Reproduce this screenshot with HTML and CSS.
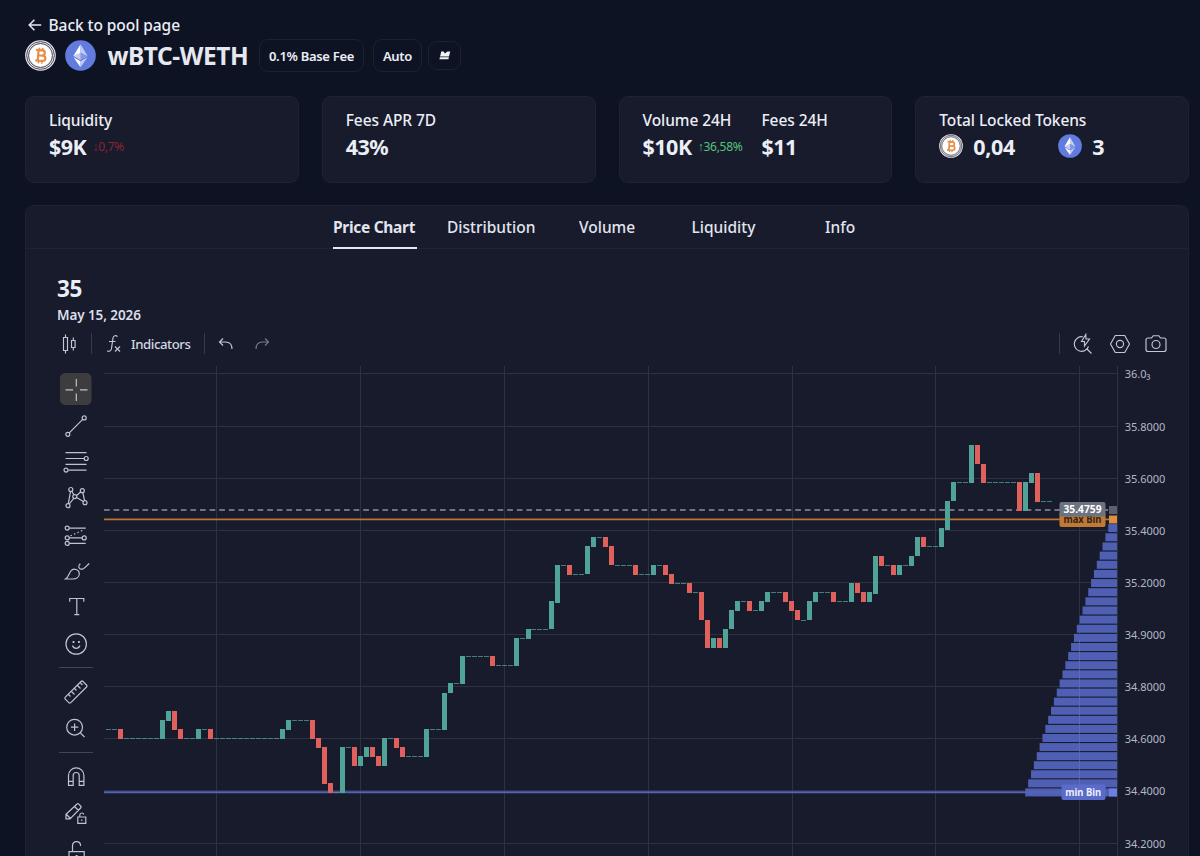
FILE: index.html
```html
<!DOCTYPE html>
<html lang="en">
<head>
<meta charset="utf-8">
<title>wBTC-WETH pool</title>
<link rel="stylesheet" href="styles.css">
</head>
<body>
<svg class="defs" width="0" height="0">
  <symbol id="btc" viewBox="0 0 32 32">
    <circle cx="16" cy="16" r="15.8" fill="#eceaf0"/>
    <circle cx="16" cy="16" r="14.3" fill="none" stroke="#35333f" stroke-width=".9"/>
    <circle cx="16" cy="16" r="12.4" fill="none" stroke="#35333f" stroke-width=".9"/>
    <circle cx="16" cy="16" r="11" fill="#fff"/>
    <g fill="none" stroke="#e58f4a" stroke-width="2.3" transform="rotate(4 16 16)">
      <path d="M11 10.600h6.600a2.600 2.600 0 0 1 0 5.300H13.600m0 0h4.800a2.800 2.800 0 0 1 0 5.600H11M13.600 10.600v10.900"/>
      <path stroke-width="1.8" d="M14.400 8v2.600M17.800 8v2.600M14.400 21.500v2.800M17.800 21.500v2.800"/>
    </g>
  </symbol>
  <symbol id="eth" viewBox="0 0 32 32">
    <circle cx="16" cy="16" r="15.8" fill="#627bdf"/>
    <path d="M16 4.300 8.800 16.300 16 20.500z" fill="#fff"/>
    <path d="M16 4.300 23.200 16.300 16 20.500z" fill="#c3cdf4"/>
    <path d="M8.800 16.300 16 13v7.500z" fill="#c3cdf4"/>
    <path d="M23.200 16.300 16 13v7.500z" fill="#8497e5"/>
    <path d="M8.800 17.800 16 22v6z" fill="#fff"/>
    <path d="M23.200 17.800 16 22v6z" fill="#c3cdf4"/>
  </symbol>
</svg>

<main class="page">
  <a class="back">
    <svg width="14" height="14" viewBox="0 0 14 14"><path d="M13.200 7H1.200M6.400 1.800 1.200 7l5.200 5.200"/></svg>
    <span>Back to pool page</span>
  </a>
  <header class="pair">
    <svg class="coin"><use href="#btc"/></svg>
    <svg class="coin second"><use href="#eth"/></svg>
    <h1>wBTC-WETH</h1>
    <span class="pill fee">0.1% Base Fee</span>
    <span class="pill auto">Auto</span>
    <span class="pill mark">
      <svg width="12" height="9" viewBox="0 0 12 9"><path d="M2.200.6 4.700.6 5.800 2.600 8.500.5 11.200.4 10 5.400H1.100z M.9 6.300H9.900L9.400 8.200H.4z"/></svg>
    </span>
  </header>

  <section class="cards">
    <article class="card"><div class="stat"><h2>Liquidity</h2><p><b>$9K</b><small class="down">↓0,7%</small></p></div></article>
    <article class="card"><div class="stat"><h2>Fees APR 7D</h2><p><b>43%</b></p></div></article>
    <article class="card">
      <div class="stat wide"><h2>Volume 24H</h2><p><b>$10K</b><small class="up">↑36,58%</small></p></div>
      <div class="stat"><h2>Fees 24H</h2><p><b>$11</b></p></div>
    </article>
    <article class="card"><div class="stat"><h2>Total Locked Tokens</h2>
      <p class="tokens"><svg><use href="#btc"/></svg><b class="amount">0,04</b><svg><use href="#eth"/></svg><b>3</b></p></div></article>
  </section>

  <section class="panel">
    <nav class="tabs">
      <a class="tab active">Price Chart</a><a class="tab t2">Distribution</a><a class="tab t3">Volume</a><a class="tab t4">Liquidity</a><a class="tab t5">Info</a>
    </nav>
    <div class="summary"><strong>35</strong><span>May 15, 2026</span></div>

    <div class="topbar">
      <svg class="ic kline" width="18" height="22" viewBox="0 0 18 22"><path d="M3.500 4.500h4v13h-4zM5.500 1.500v3M5.500 17.500v3M11.500 7.500h3.600v7h-3.600zM13.300 4.500v3M13.300 14.500v3"/></svg>
      <i class="bar"></i>
      <svg class="ic fx" width="16" height="20" viewBox="0 0 16 20"><path d="M11.500 2.600C10 .9 7.400 1.600 7 4L5.500 14.500C5.200 17.200 3.100 17.700 1.200 16.900M3 7.500H9.500M9 12.500l5 5M14 12.500l-5 5"/></svg>
      <span class="indicators">Indicators</span>
      <i class="bar"></i>
      <svg class="ic undo" width="16" height="14" viewBox="0 0 16 14"><path d="M5 1.500 1.500 5 5 8.500M1.500 5H7.500Q14 5 14 12"/></svg>
      <svg class="ic redo" width="16" height="14" viewBox="0 0 16 14"><path d="M11 1.500 14.500 5 11 8.500M14.500 5H8.500Q2 5 2 12"/></svg>
      <span class="grow"></span>
      <i class="bar"></i>
      <svg class="ic quick" width="20" height="22" viewBox="0 0 20 22"><path d="M9.800 3.800A7.300 7.300 0 1 0 15.500 13.500M13.500 15.500l5 5M12.800 1.500 8.500 8.500h3v4.500l5-7h-3.500z"/></svg>
      <svg class="ic hex" width="22" height="20" viewBox="0 0 22 20"><path d="M6.300 1.500h9.400L20.500 10l-4.800 8.500H6.300L1.500 10z"/><circle cx="11" cy="10" r="3.600"/></svg>
      <svg class="ic cam" width="22" height="20" viewBox="0 0 22 20"><path d="M3 4h3.500L8.200 1.700h5.600L15.500 4H19q2 0 2 2v9.500q0 2-2 2H3q-2 0-2-2V6q0-2 2-2z"/><circle cx="11" cy="10.500" r="4"/></svg>
    </div>

    <div class="workspace">
      <aside class="tools">
        <div class="tool on"><svg viewBox="0 0 36 36"><path d="M7.500 18.800h7.500M22 18.800h7.500M18.300 8v7.500M18.300 22.500v7.500"/></svg></div>
        <div class="tool"><svg viewBox="0 0 36 36"><circle cx="9.800" cy="26.300" r="2"/><circle cx="26.200" cy="9.900" r="2"/><path d="M11.300 24.800 24.700 11.400"/></svg></div>
        <div class="tool"><svg viewBox="0 0 36 36"><path d="M7.500 8.700h21M7.500 14.500h18.500M7.500 20.300h21M10.500 26.100h18"/><circle cx="28.200" cy="14.500" r="2"/><circle cx="8" cy="26.100" r="2"/></svg></div>
        <div class="tool"><svg viewBox="0 0 36 36"><circle cx="12.800" cy="9.500" r="2"/><circle cx="24.300" cy="10.700" r="2"/><circle cx="16.800" cy="16.600" r="2"/><circle cx="10" cy="25.700" r="2"/><circle cx="27" cy="22.700" r="2"/><path d="M12.500 11.500 10.300 23.700M13.700 11.300l2.300 3.600M18.500 15.500l4.200-3.500M24.800 12.700l1.800 8M18.600 17.600l6.700 4M15.700 18.300 11.300 24"/></svg></div>
        <div class="tool"><svg viewBox="0 0 36 36"><circle cx="9.200" cy="11.100" r="2"/><circle cx="9.200" cy="20.900" r="2"/><circle cx="26.200" cy="20.900" r="2"/><circle cx="9.200" cy="26.400" r="2"/><path d="M11.200 11.100h16.500M11.200 20.900h13M11.200 26.400h16.500"/><path stroke-dasharray="1.500 2.300" d="M12.500 18.800 26.500 12.500"/></svg></div>
        <div class="tool"><svg viewBox="0 0 36 36"><path d="M7.500 26 C10.500 24 11 20.500 12.800 18 C15.500 14.500 21.300 16.500 21.300 20.800 C21.300 24 18.500 26 15 26ZM22.300 10.800C19.500 13.200 20.500 16.200 24 16.300C26 16 27 14.500 31.200 10.500"/></svg></div>
        <div class="tool"><svg viewBox="0 0 36 36"><path d="M11.700 12.800V9.500H25.800V12.800M18.800 9.500V25.700M16.300 25.700h5"/></svg></div>
        <div class="tool"><svg viewBox="0 0 36 36"><circle cx="18.200" cy="18" r="10.200"/><path d="M14.500 19.500q1 2.800 3.700 2.800t3.700-2.800"/><path stroke-width="2" d="M14.600 16h1.800M20 16h1.800"/></svg></div>
        <hr>
        <div class="tool"><svg viewBox="0 0 36 36"><path d="M7.300 23.200 23 7.500q1-1 2 0l3.500 3.500q1 1 0 2L12.800 28.700q-1 1-2 0L7.300 25.200q-1-1 0-2zM10.500 20.500l2 2M13.500 17.500l3 3M16.500 14.500l2 2M19.500 11.500l3 3M22.500 9l2 2"/></svg></div>
        <div class="tool"><svg viewBox="0 0 36 36"><circle cx="16.600" cy="17.200" r="7.900"/><path d="M22.300 22.800l4.200 4.200M16.600 13.500v7.400M12.900 17.200h7.400"/></svg></div>
        <hr>
        <div class="tool"><svg viewBox="0 0 36 36"><path d="M10.500 27.300V17.500a7.700 7.700 0 0 1 15.400 0v9.800h-4.700V17.500a3 3 0 0 0-6 0v9.800zM10.500 23.300h4.700M21.200 23.300h4.700"/></svg></div>
        <div class="tool"><svg viewBox="0 0 36 36"><path d="M8 23.800v-4.500L18.800 9.200q1-1 2 0l1.800 1.800q1 1 0 2L12 23.800zM16.500 11.500l4 4M8.500 19.500l4 4M19.800 22h8v6.300h-8zM21.800 22v-2q.2-2 2-2 1.800 0 2 1.500M23.800 24.500v1.500"/></svg></div>
        <div class="tool"><svg viewBox="0 0 36 36"><path d="M11 20.600h15.200v10.500H11zM14.500 20.600v-6q.2-4 4-4t4 3.500v1"/><path stroke-width="2" d="M18.600 24v3"/></svg></div>
      </aside>
      <svg class="chart" id="chart" viewBox="104 362 1084 494"></svg>
    </div>
  </section>
</main>
<script src="chart.js"></script>
</body>
</html>
```
FILE: styles.css
```css
* { box-sizing: border-box; }
body {
  margin: 0;
  height: 856px;
  overflow: hidden;
  background: #0e1324;
  color: #eceef6;
  font-family: "Noto Sans", "Open Sans", sans-serif;
}
h1, h2, p { margin: 0; }
.defs { position: absolute; }
.page { height: 856px; padding: 13px 11px 0 25px; display: flex; flex-direction: column; }

.back { display: flex; align-items: center; height: 24px; padding-left: 3px; gap: 6.500px; font-size: 15.500px; font-weight: 500; letter-spacing: -0.060px; }
.back svg { fill: none; stroke: #e6e8f0; stroke-width: 1.500; }

.pair { display: flex; align-items: center; height: 37px; }
.coin { width: 31px; height: 31px; }
.coin.second { margin-left: 9px; }
h1 { margin-left: 11.500px; width: 151.500px; font-size: 24.500px; line-height: 34px; font-weight: 700; letter-spacing: -0.450px; white-space: nowrap; color: #e6e8f0; }
.pill { display: flex; align-items: center; justify-content: center; height: 33px; border: 1px solid #1c2132; border-radius: 9px; font-size: 13px; font-weight: 600; letter-spacing: -0.300px; white-space: nowrap; }
.fee { width: 105px; }
.auto { width: 49px; margin-left: 9px; }
.mark { width: 33px; height: 29px; margin-left: 6px; }
.mark svg { fill: #f2f3f8; }

.cards { display: grid; grid-template-columns: repeat(4, 1fr); gap: 23px; margin-top: 22px; }
.card { display: flex; height: 87px; padding: 12px 23px; background: #171b2c; border: 1px solid #1e2233; border-radius: 9px; }
.stat h2 { font-size: 15.500px; line-height: 23px; font-weight: 500; letter-spacing: -0.080px; white-space: nowrap; }
.stat p { display: flex; align-items: center; height: 28px; }
.stat b { font-size: 21.500px; font-weight: 700; letter-spacing: -0.500px; }
.stat small { margin-left: 6px; font-size: 12px; letter-spacing: -0.250px; }
.wide { width: 119px; }
.down { color: #8c2435; }
.up { color: #55c47a; }
.tokens svg { width: 24px; height: 24px; margin-right: 10px; }
.tokens .amount { width: 85px; letter-spacing: -0.300px; }

.panel { flex: 1; min-height: 0; margin-top: 22px; background: #171b2c; border: 1px solid #1e2233; border-bottom: 0; border-radius: 9px 9px 0 0; overflow: hidden; }
.tabs { display: flex; height: 43px; padding-left: 307px; border-bottom: 1px solid #202335; }
.tab { height: 43px; line-height: 42px; font-size: 15.500px; font-weight: 500; white-space: nowrap; color: #e2e4ee; }
.active { width: 84px; border-bottom: 2px solid #e6e8f2; font-weight: 700; letter-spacing: -0.300px; }
.t2 { margin-left: 30px; width: 132px; }
.t3 { width: 112.500px; }
.t4 { width: 133.500px; }
.summary { display: flex; flex-direction: column; padding: 24px 0 0 31px; }
.summary strong { font-size: 22.500px; line-height: 32px; font-weight: 700; letter-spacing: -0.300px; }
.summary span { font-size: 13.500px; line-height: 20px; font-weight: 600; letter-spacing: -0.100px; color: #dcdee9; }

.topbar { display: flex; align-items: center; height: 37px; padding: 0 21px 0 34px; }
.ic { fill: none; stroke: #c3c7d4; stroke-width: 1.150; flex: none; }
.bar { width: 1px; height: 21px; background: #363a4a; }
.kline { margin-right: 13px; }
.fx { margin: 0 9px 0 14px; }
.indicators { width: 73px; font-size: 13.200px; font-weight: 500; letter-spacing: -0.430px; color: #d3d6e0; }
.undo { margin-left: 13px; }
.redo { margin-left: 20px; opacity: .55; }
.grow { flex: 1; }
.quick { margin-left: 13px; }
.hex { margin-left: 16px; }
.cam { margin-left: 14px; }

.workspace { display: flex; height: 494px; }
.tools { width: 78px; padding: 9px 0 0 31.500px; flex: none; }
.tool { width: 36px; height: 36.360px; display: flex; align-items: center; justify-content: center; }
.tool svg { width: 36px; height: 36px; flex: none; fill: none; stroke: #bfc3d0; stroke-width: 1.200; }
.on { padding: 2px; background: #3d3d3f; background-clip: content-box; border-radius: 7px; clip-path: inset(2px round 5px); }
.tools hr { width: 34px; height: 1px; margin: 5.400px 0; border: 0; background: #44464c; margin-left: 1px; }
.chart { width: 1084px; height: 494px; flex: none; }

.grid { stroke: #2d3241; stroke-width: 1; shape-rendering: crispEdges; }
.rise { fill: #4fa397; }
.fall { fill: #e0605c; }
.bin { fill: #4f60b4; }
.axis { fill: #b3b8c4; font-size: 11px; }
.tag { font-size: 10.800px; font-weight: 700; text-anchor: middle; }
```
FILE: chart.js
```js
const svg = document.getElementById('chart');
const el = (name, attrs, text) => {
  const node = document.createElementNS('http://www.w3.org/2000/svg', name);
  for (const key in attrs) node.setAttribute(key, attrs[key]);
  if (text) node.textContent = text;
  svg.appendChild(node);
};
const line = (x1, y1, x2, y2, attrs) => el('line', { x1, y1, x2, y2, ...attrs });
const rect = (x, y, width, height, attrs) => el('rect', { x, y, width, height, ...attrs });

// Vertical position of a price bin.
const levelY = (n) => 738 - 9.08 * n - 0.002 * n * n;

const prices = ['36.0₃', '35.8000', '35.6000', '35.4000', '35.2000', '34.9000', '34.8000', '34.6000', '34.4000', '34.2000'];
prices.forEach((p, i) => {
  const y = Math.floor(373.9 + i * 52.13) + 0.5;
  line(104, y, 1117, y, { class: 'grid' });
  el('text', { x: 1124.7, y: y + 4.2, class: 'axis' }, p);
});
for (let x = 216.5; x < 1100; x += 143.9) line(Math.floor(x) + 0.5, 366, Math.floor(x) + 0.5, 856, { class: 'grid' });

// Liquidity per bin.
for (let n = -6; n < 24; n++) {
  const x = 1025.3 + (n + 6) * 2.86;
  rect(x, levelY(n) - 4, 1117 - x, 8, { class: 'bin' });
}
line(1079.5, 640, 1079.5, 796, { stroke: '#7684cb', 'stroke-opacity': 0.35 });
line(1117.5, 366, 1117.5, 856, { class: 'grid' });

// Bin changes between consecutive candles.
const moves = [
  0, 0, -1, 0, 0, 0, 0, 0, 0, 2, 1, -2, -1, 0, 0, 1, 0, -1, 0, 0, 0, 0, 0, 0, 0, 0, 0, 0, 0, 1,
  1, 0, 0, 0, -2, -1, -4, -1, 0, 5, 0, -2, 1, 1, -1, -1, 3, 0, -1, -1, 0, 0, 0, 3, 0, 0, 4, 1, 0, 3,
  0, 0, 0, 0, -1, 0, 0, 0, 3, 0, 1, 0, 0, 0, 3, 4, 0, -1, 0, 0, 3, 1, 0, -1, -2, 0, 0, 0, -1, 0,
  0, 1, 0, -1, -1, 0, 0, -1, 0, -3, -3, 1, -1, 2, 2, 1, 0, -1, 0, 1, 1, 0, 0, -1, -1, -1, 0, 2, 1, 0,
  0, -1, 0, 0, 2, -1, -1, 1, 4, -1, 0, -1, 1, 0, 1, 2, -1, 0, 0, 2, 3, 2, 0, 0, 4, -2, -2, 0, 0, 0,
  0, 0, -3, 3, 1, -3, 0, 0
];

line(104, 510, 1117, 510, { stroke: '#8b909d', 'stroke-width': 1.7, 'stroke-dasharray': '5.700 3.900' });
line(104, 519.3, 1117, 519.3, { stroke: '#b9752f', 'stroke-width': 1.8 });
line(104, 792.3, 1062, 792.3, { stroke: '#5363b8', 'stroke-width': 2 });

let level = 1;
moves.forEach((move, i) => {
  const x = Math.round(106.2 + i * 5.99);
  const from = levelY(level);
  level += move;
  const to = levelY(level);
  if (!move) rect(x, Math.round(to), 5, 1, { class: 'rise', opacity: 0.75 });
  else rect(x, Math.round(Math.min(from, to)), 5, Math.round(Math.abs(from - to)) + 1, { class: move > 0 ? 'rise' : 'fall' });
});

rect(1109, 506, 8, 8, { fill: '#59606f' });
rect(1109, 515.5, 8, 8, { fill: '#e08d40' });
rect(1109, 788.5, 8, 8, { fill: '#6a80e6' });
rect(1059.5, 512, 46, 15, { rx: 2, fill: '#c07a35' });
el('text', { x: 1082.5, y: 522.5, class: 'tag', fill: '#33251c', textLength: 38, lengthAdjust: 'spacingAndGlyphs' }, 'max Bin');
rect(1059.5, 502, 46, 14.5, { rx: 2, fill: '#6c7380' });
el('text', { x: 1082.5, y: 513, class: 'tag', fill: '#ffffff', textLength: 38, lengthAdjust: 'spacingAndGlyphs' }, '35.4759');
rect(1061.5, 784.5, 44, 15.5, { rx: 2, fill: '#5a6bca' });
el('text', { x: 1083.2, y: 795.7, class: 'tag', fill: '#eef0fb', textLength: 36, lengthAdjust: 'spacingAndGlyphs' }, 'min Bin');
```
